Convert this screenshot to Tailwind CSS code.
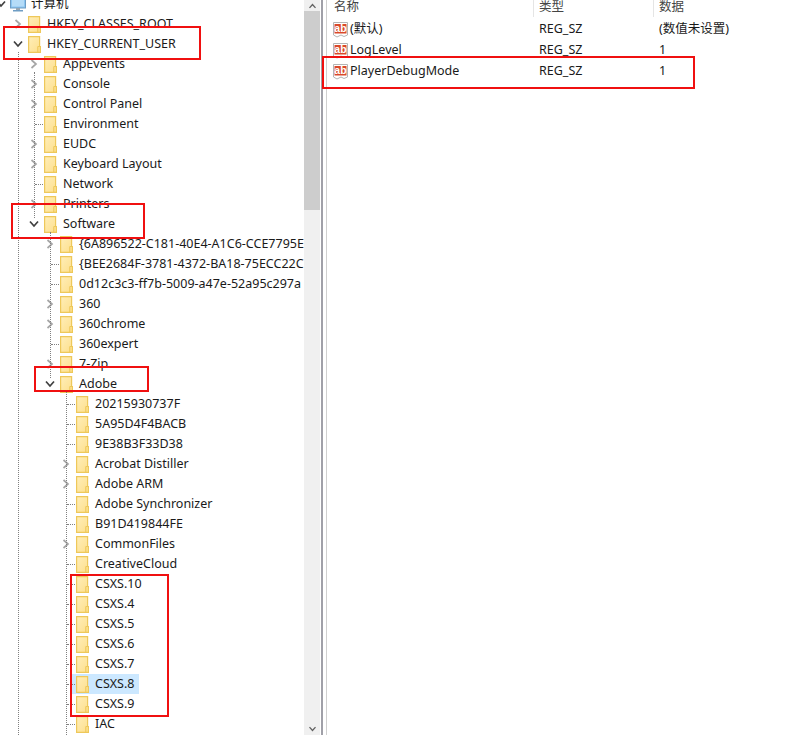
<!DOCTYPE html>
<html lang="en">
<head>
<meta charset="UTF-8">
<title>Registry Editor</title>
<script src="https://cdn.jsdelivr.net/npm/@tailwindcss/browser@4"></script>
</head>
<body class="bg-white">
<svg width="0" height="0" class="absolute">
  <defs>
    <linearGradient id="folderfill" x1="0" y1="0" x2="1" y2="1">
      <stop offset="0" stop-color="#ffeeb8"/>
      <stop offset="1" stop-color="#fddf8c"/>
    </linearGradient>
    <symbol id="folder" viewBox="0 0 13 17">
      <path d="M0.6 0.6H11.6V10.5H12.4V16.4H0.6Z" fill="url(#folderfill)" stroke="#eec85a" stroke-width="1.2"/>
      <path d="M9.8 10.5H12.4M9.8 10.5V16.4" stroke="#eec85a" stroke-width="1.1" fill="none"/>
    </symbol>
    <symbol id="right" viewBox="0 0 8 10"><path d="M1.5 1L6 5L1.5 9" fill="none" stroke="#a6a6a6" stroke-width="1.7"/></symbol>
    <symbol id="down" viewBox="0 0 10 8"><path d="M1 1.5L5 6L9 1.5" fill="none" stroke="#404040" stroke-width="1.7"/></symbol>
    <symbol id="regsz" viewBox="0 0 15 16">
      <path d="M0.5 0.5H14.5V13L11 14.5L8 13L4 15L0.5 13Z" fill="#fff" stroke="#b4b4b4"/>
      <rect x="1.5" y="2" width="12" height="9.5" fill="#d9482a"/>
      <text x="7.5" y="10.2" text-anchor="middle" font-family="Liberation Sans" font-weight="700" font-size="10.5" fill="#fff">ab</text>
    </symbol>
  </defs>
</svg>

<div class="relative h-[735px] w-[804px] overflow-hidden font-['Noto_Sans','Noto_Sans_CJK_SC',sans-serif] text-[12.5px] text-[#1a1a1a]">
  <div class="flex h-full">
    <div class="relative h-full w-[304px] overflow-hidden">
      <div id="guides"></div>
      <div id="tree" class="-mt-[6px]"></div>
    </div>

    <div class="flex h-full w-[16px] flex-col bg-[#f0f0f0]">
      <div class="flex h-[11px] items-center justify-center">
        <svg width="9" height="6" viewBox="0 0 10 8"><path d="M1 6.5L5 2L9 6.5" fill="none" stroke="#606060" stroke-width="1.7"/></svg>
      </div>
      <div class="h-[199px] bg-[#cdcdcd]"></div>
      <div class="flex flex-1 items-end justify-center pb-[3px]">
        <svg width="9" height="6" viewBox="0 0 10 8"><path d="M1 1.5L5 6L9 1.5" fill="none" stroke="#606060" stroke-width="1.7"/></svg>
      </div>
    </div>

    <div class="h-full w-px"></div>
    <div class="h-full w-[2px] bg-[#a0a0a8]"></div>
    <div class="h-full w-[3px]"></div>
    <div class="h-full w-px bg-[#d0d0d0]"></div>

    <div class="flex-1">
      <div class="-mt-[3px] flex h-[20px] items-center text-[#444]">
        <div class="w-[206px] pl-[7px]">名称</div>
        <div class="h-full w-px bg-[#e5e5e5]"></div>
        <div class="w-[119px] pl-[5px]">类型</div>
        <div class="h-full w-px bg-[#e5e5e5]"></div>
        <div class="pl-[5px]">数据</div>
      </div>
      <div class="mt-[2px] flex h-[21px] items-center">
        <svg class="ml-[6px] h-[16px] w-[15px]"><use href="#regsz"/></svg>
        <div class="ml-[2px] w-[189px]">(默认)</div>
        <div class="w-[120px]">REG_SZ</div>
        <div>(数值未设置)</div>
      </div>
      <div class="flex h-[21px] items-center">
        <svg class="ml-[6px] h-[16px] w-[15px]"><use href="#regsz"/></svg>
        <div class="ml-[2px] w-[189px]">LogLevel</div>
        <div class="w-[120px]">REG_SZ</div>
        <div>1</div>
      </div>
      <div class="flex h-[21px] items-center">
        <svg class="ml-[6px] h-[16px] w-[15px]"><use href="#regsz"/></svg>
        <div class="ml-[2px] w-[189px]">PlayerDebugMode</div>
        <div class="w-[120px]">REG_SZ</div>
        <div>1</div>
      </div>
    </div>
  </div>

  <!-- red annotation boxes drawn on top of the screenshot -->
  <div class="absolute left-[3px] top-[26px] h-[34px] w-[198px] border-2 border-[#f01010]"></div>
  <div class="absolute left-[11px] top-[203px] h-[36px] w-[134px] border-2 border-[#f01010]"></div>
  <div class="absolute left-[34px] top-[366px] h-[26px] w-[115px] border-2 border-[#f01010]"></div>
  <div class="absolute left-[70px] top-[574px] h-[143px] w-[99px] border-2 border-[#f01010]"></div>
  <div class="absolute left-[322px] top-[56px] h-[33px] w-[373px] border-2 border-[#f01010]"></div>
</div>

<script>
  // level, toggle (r = collapsed, d = open, l = leaf with dotted stub), name
  const rows = [
    [0, 'r', 'HKEY_CLASSES_ROOT'],
    [0, 'd', 'HKEY_CURRENT_USER'],
    [1, 'r', 'AppEvents'],
    [1, 'r', 'Console'],
    [1, 'r', 'Control Panel'],
    [1, 'l', 'Environment'],
    [1, 'r', 'EUDC'],
    [1, 'r', 'Keyboard Layout'],
    [1, 'l', 'Network'],
    [1, 'r', 'Printers'],
    [1, 'd', 'Software'],
    [2, 'r', '{6A896522-C181-40E4-A1C6-CCE7795E'],
    [2, 'l', '{BEE2684F-3781-4372-BA18-75ECC22C'],
    [2, 'l', '0d12c3c3-ff7b-5009-a47e-52a95c297a'],
    [2, 'r', '360'],
    [2, 'r', '360chrome'],
    [2, 'l', '360expert'],
    [2, 'r', '7-Zip'],
    [2, 'd', 'Adobe'],
    [3, 'l', '20215930737F'],
    [3, 'l', '5A95D4F4BACB'],
    [3, 'l', '9E38B3F33D38'],
    [3, 'r', 'Acrobat Distiller'],
    [3, 'r', 'Adobe ARM'],
    [3, 'l', 'Adobe Synchronizer'],
    [3, 'l', 'B91D419844FE'],
    [3, 'r', 'CommonFiles'],
    [3, 'l', 'CreativeCloud'],
    [3, 'l', 'CSXS.10'],
    [3, 'l', 'CSXS.4'],
    [3, 'l', 'CSXS.5'],
    [3, 'l', 'CSXS.6'],
    [3, 'l', 'CSXS.7'],
    [3, 'l', 'CSXS.8'],
    [3, 'l', 'CSXS.9'],
    [3, 'l', 'IAC'],
  ];

  let html = `<div class="flex h-[20px] items-center whitespace-nowrap">
    <svg class="-ml-[4px] h-[8px] w-[10px] shrink-0"><use href="#down"/></svg>
    <svg width="16" height="15" viewBox="0 0 16 15" class="ml-[4px] shrink-0">
      <rect x="0.5" y="0.5" width="15" height="10.5" fill="#8cc6f2" stroke="#6f9dc4"/>
      <rect x="2" y="2" width="12" height="7.5" fill="#b5dcf8"/>
      <rect x="6" y="11" width="4" height="2" fill="#9aa8b4"/>
      <rect x="3" y="13" width="10" height="1.5" fill="#6f9dc4"/>
    </svg>
    <span class="ml-[5px]">计算机</span>
  </div>`;

  rows.forEach(([level, toggle, name]) => {
    const icon = toggle === 'r'
      ? '<svg class="h-[10px] w-[8px]"><use href="#right"/></svg>'
      : toggle === 'd' ? '<svg class="h-[8px] w-[10px]"><use href="#down"/></svg>' : '';
    const selected = name === 'CSXS.8';
    html += `<div class="flex h-[20px] items-center whitespace-nowrap" style="padding-left:${level * 16 + 12}px">
      <div class="flex w-[11px] shrink-0 items-center justify-center">${icon}</div>
      <div class="${selected ? 'ml-px flex h-[20px] items-center bg-[#cce8ff] pl-[4px] pr-[5px]' : 'ml-[5px] flex h-[20px] items-center'}">
        <svg class="h-[17px] w-[13px] shrink-0"><use href="#folder"/></svg>
        <span class="ml-[6px]">${name}</span>
      </div>
    </div>`;
  });
  document.getElementById('tree').innerHTML = html;

  // dotted tree guides: [x, top, height]
  const vert = [[18, 52, 683], [34, 72, 146], [50, 232, 146], [66, 392, 343]];
  let guides = vert.map(([x, top, h]) =>
    `<div class="absolute w-0 border-l border-dotted border-[#808080]" style="left:${x}px;top:${top}px;height:${h}px"></div>`).join('');
  rows.forEach(([level, toggle], i) => {
    if (toggle === 'l') {
      const y = 24 + i * 20;
      guides += `<div class="absolute h-0 w-[8px] border-t border-dotted border-[#808080]" style="left:${level * 16 + 19}px;top:${y}px"></div>`;
    }
  });
  document.getElementById('guides').innerHTML = guides;
</script>
</body>
</html>
